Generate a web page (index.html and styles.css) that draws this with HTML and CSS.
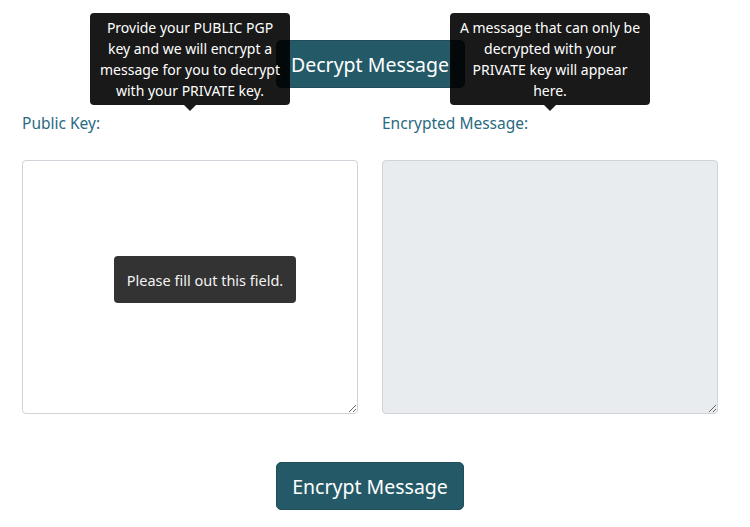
FILE: index.html
```html
<!DOCTYPE html>
<html lang="en">
<head>
<meta charset="utf-8">
<title>PGP</title>
<link rel="stylesheet" href="styles.css">
</head>
<body>
<main class="page">
  <div class="top-row">
    <button class="btn" type="button">Decrypt Message</button>
  </div>
  <div class="cols">
    <div class="col">
      <label class="label" for="pub">Public Key:
        <span class="tooltip">Provide your PUBLIC PGP key and we will encrypt a message for you to decrypt with your PRIVATE key.</span>
      </label>
      <div class="field">
        <textarea id="pub" class="area" required></textarea>
        <div class="bubble">Please fill out this field.</div>
      </div>
    </div>
    <div class="col">
      <label class="label" for="enc">Encrypted Message:
        <span class="tooltip">A message that can only be decrypted with your PRIVATE key will appear here.</span>
      </label>
      <div class="field">
        <textarea id="enc" class="area area-ro" readonly></textarea>
      </div>
    </div>
  </div>
  <div class="bottom-row">
    <button class="btn" type="submit">Encrypt Message</button>
  </div>
</main>
</body>
</html>
```
FILE: styles.css
```css
* { box-sizing: border-box; }
html, body { margin: 0; padding: 0; background: #fff; }
body {
  font-family: "Noto Sans", "Open Sans", sans-serif;
  color: #212529;
}
.page {
  padding: 40px 32px 0 22px;
  width: 750px;
}
.top-row, .bottom-row {
  display: flex;
  justify-content: center;
}
.btn {
  font-family: inherit;
  font-size: 19.5px;
  line-height: 30px;
  height: 48px;
  padding: 2px 10px 0;
  color: #fff;
  background: #245a67;
  border: 1px solid #1f4e5a;
  border-radius: 5px;
  cursor: pointer;
}
.top-row .btn { width: 189px; }
.bottom-row .btn { width: 188px; }
.cols {
  display: grid;
  grid-template-columns: 336px 336px;
  column-gap: 24px;
  margin-top: 23px;
}
.col { display: flex; flex-direction: column; }
.label {
  position: relative;
  display: block;
  font-size: 15.5px;
  line-height: 24px;
  color: #2a6a82;
  margin-bottom: 25px;
}
.tooltip {
  position: absolute;
  left: 50%;
  bottom: calc(100% + 6px);
  transform: translateX(-50%);
  width: 200px;
  padding: 4px 8px;
  background: rgba(0, 0, 0, 0.9);
  color: #fff;
  font-size: 14px;
  line-height: 21px;
  text-align: center;
  border-radius: 4px;
  z-index: 2;
}
.tooltip::after {
  content: "";
  position: absolute;
  left: 50%;
  top: 100%;
  margin-left: -6px;
  border-style: solid;
  border-width: 6px 6px 0 6px;
  border-color: rgba(0, 0, 0, 0.9) transparent transparent transparent;
}
.field { position: relative; }
.area {
  display: block;
  width: 336px;
  height: 254px;
  border: 1px solid #ced4da;
  border-radius: 4px;
  background: #fff;
  font-family: inherit;
  font-size: 16px;
  padding: 6px 12px;
  outline: none;
}
.area-ro { background: #e9ecef; }
.bubble {
  position: absolute;
  left: 92px;
  top: 96px;
  width: 182px;
  height: 47px;
  display: flex;
  align-items: center;
  justify-content: center;
  background: #333;
  color: #f2f2f2;
  font-size: 14.5px;
  border-radius: 4px;
}
.bottom-row { margin-top: 48px; }
```
